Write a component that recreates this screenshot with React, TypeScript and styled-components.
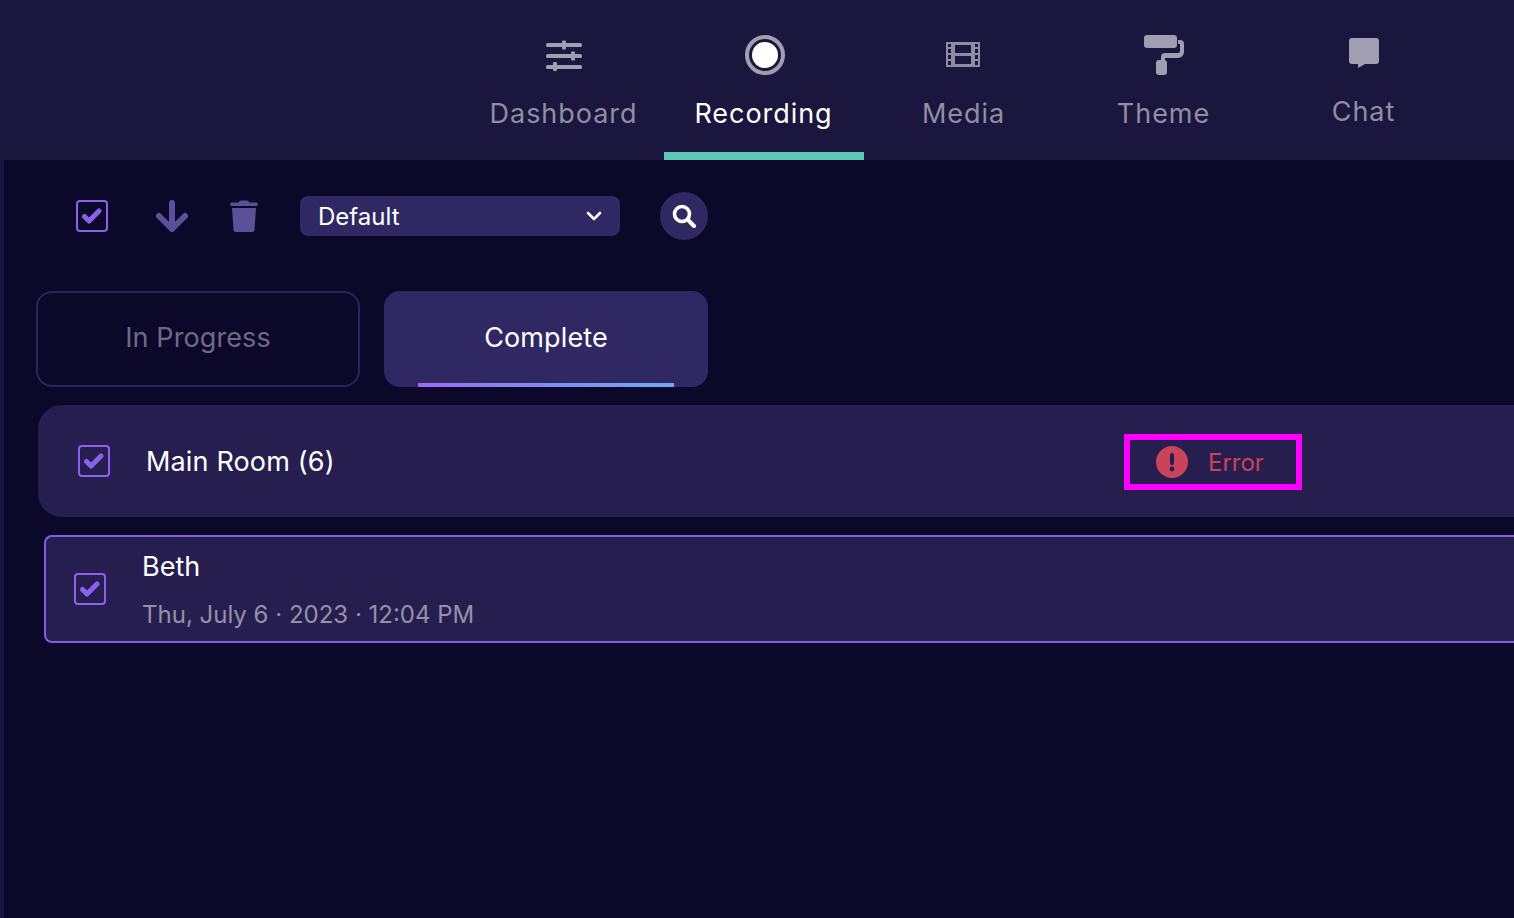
import styled, { createGlobalStyle } from "styled-components";

const GlobalStyle = createGlobalStyle`
  html, body {
    margin: 0;
    padding: 0;
    background: #0c0829;
  }
  * {
    box-sizing: border-box;
  }
`;

const navItems = [
  { label: "Dashboard", icon: <SlidersIcon /> },
  { label: "Recording", icon: <RecordIcon />, active: true, nudge: 2 },
  { label: "Media", icon: <FilmIcon />, nudge: -2 },
  { label: "Theme", icon: <RollerIcon /> },
  { label: "Chat", icon: <ChatIcon />, compact: true },
];

const App = () => {
  return (
    <Page>
      <GlobalStyle />
      <Header>
        {navItems.map((item) => (
          <NavItem key={item.label} $active={item.active}>
            <NavIcon $compact={item.compact} $nudge={item.nudge}>
              {item.icon}
            </NavIcon>
            <NavLabel $active={item.active}>{item.label}</NavLabel>
          </NavItem>
        ))}
      </Header>
      <Body>
        <SideStrip />
        <Content>
          <Toolbar>
            <ToolbarCheck>
              <CheckBox />
            </ToolbarCheck>
            <ArrowIcon />
            <TrashIcon />
            <Select>
              <span>Default</span>
              <ChevronIcon />
            </Select>
            <SearchButton>
              <SearchIcon />
            </SearchButton>
          </Toolbar>
          <Tabs>
            <Tab>In Progress</Tab>
            <Tab $active>
              Complete
              <TabUnderline />
            </Tab>
          </Tabs>
          <RoomRow>
            <CheckBox />
            <RoomName>Main Room (6)</RoomName>
            <ErrorBox>
              <ErrorIcon />
              <ErrorText>Error</ErrorText>
            </ErrorBox>
          </RoomRow>
          <RecordingRow>
            <CheckBox />
            <RecordingInfo>
              <RecordingName>Beth</RecordingName>
              <RecordingDate>Thu, July 6 · 2023 · 12:04 PM</RecordingDate>
            </RecordingInfo>
          </RecordingRow>
        </Content>
      </Body>
    </Page>
  );
};

function SlidersIcon() {
  return (
    <svg width="36" height="32" viewBox="0 0 36 32" fill="#a19eb2">
      <rect y="4" width="36" height="4" rx="1.5" />
      <rect y="15" width="36" height="4" rx="1.5" />
      <rect y="26" width="36" height="4" rx="1.5" />
      <rect x="16" y="1.500" width="4" height="9" rx="1" />
      <rect x="25" y="12.500" width="4" height="9" rx="1" />
      <rect x="7" y="23" width="4" height="9" rx="1" />
    </svg>
  );
}

function RecordIcon() {
  return (
    <svg width="40" height="40" viewBox="0 0 40 40">
      <circle cx="20" cy="20" r="18" fill="none" stroke="#a19eb2" strokeWidth="4" />
      <circle cx="20" cy="20" r="13" fill="#fff" />
    </svg>
  );
}

function FilmIcon() {
  return (
    <svg width="34" height="26" viewBox="0 0 34 26" fill="#8f8ba3">
      <path
        fillRule="evenodd"
        d="M0 0h34v25H0zM2 2v3h3V2zm0 5v4h3V7zm0 6v4h3v-4zm0 6v4h3v-4zM29 2v3h3V2zm0 5v4h3V7zm0 6v4h3v-4zm0 6v4h3v-4zM9 3v8h16V3zm0 11v8h16v-8z"
      />
    </svg>
  );
}

function RollerIcon() {
  return (
    <svg width="40" height="40" viewBox="0 0 40 40" fill="#a19eb2">
      <rect width="33" height="13" rx="3" />
      <path d="M34 5h2a4 4 0 0 1 4 4v8a6 6 0 0 1-6 6H21v5h-4v-6a4 4 0 0 1 4-4h13a2 2 0 0 0 2-2V9h-2z" />
      <rect x="12" y="25" width="11" height="15" rx="3" />
    </svg>
  );
}

function ChatIcon() {
  return (
    <svg width="30" height="30" viewBox="0 0 30 30" fill="#a19eb2">
      <path d="M3 0h24a3 3 0 0 1 3 3v20a3 3 0 0 1-3 3H16l-7 4v-4H3a3 3 0 0 1-3-3V3a3 3 0 0 1 3-3z" />
    </svg>
  );
}

function CheckBox() {
  return (
    <CheckFrame>
      <svg width="20" height="16" viewBox="0 0 20 16" fill="none">
        <path
          d="M2.500 8.500l4.500 4.500L17 3"
          stroke="#8b62f0"
          strokeWidth="5"
          strokeLinecap="round"
          strokeLinejoin="round"
        />
      </svg>
    </CheckFrame>
  );
}

function ArrowIcon() {
  return (
    <svg width="32" height="32" viewBox="0 0 32 32" fill="none">
      <path
        d="M16 3v26M3 16l13 13 13-13"
        stroke="#5c5199"
        strokeWidth="6"
        strokeLinecap="round"
        strokeLinejoin="round"
      />
    </svg>
  );
}

function TrashIcon() {
  return (
    <svg width="32" height="32" viewBox="0 0 32 32" fill="#5c5199">
      <rect x="2" y="2.500" width="28" height="3.500" rx="1.750" />
      <path d="M11 3a2 2 0 0 1 2-2.500h6A2 2 0 0 1 21 3z" />
      <path d="M4 8h24l-1.500 22a2 2 0 0 1-2 2h-17a2 2 0 0 1-2-2z" />
    </svg>
  );
}

function ChevronIcon() {
  return (
    <svg width="16" height="10" viewBox="0 0 16 10" fill="none">
      <path
        d="M2 2l6 6 6-6"
        stroke="#fff"
        strokeWidth="2.600"
        strokeLinecap="round"
        strokeLinejoin="round"
      />
    </svg>
  );
}

function SearchIcon() {
  return (
    <svg width="24" height="24" viewBox="0 0 24 24" fill="none" stroke="#fff">
      <circle cx="10" cy="10" r="7.500" strokeWidth="3.600" />
      <path d="M16 16l6 6" strokeWidth="4" strokeLinecap="round" />
    </svg>
  );
}

function ErrorIcon() {
  return (
    <svg width="32" height="32" viewBox="0 0 32 32">
      <circle cx="16" cy="16" r="16" fill="#c9435a" />
      <rect x="14" y="7" width="4" height="12" rx="2" fill="#271e50" />
      <circle cx="16" cy="23" r="2.400" fill="#271e50" />
    </svg>
  );
}

const Page = styled.div`
  width: 1514px;
  height: 918px;
  overflow: hidden;
  display: flex;
  flex-direction: column;
  background: #0c0829;
  font-family: Inter, "Liberation Sans", sans-serif;
  color: #fff;
`;

const Header = styled.header`
  flex: 0 0 160px;
  display: flex;
  justify-content: flex-end;
  padding-right: 50px;
  background: #1a163e;
`;

const NavItem = styled.div<{ $active?: boolean }>`
  width: 200px;
  height: 160px;
  padding-top: 35px;
  display: flex;
  flex-direction: column;
  align-items: center;
  border-bottom: 8px solid ${(props) => (props.$active ? "#5ac8b4" : "transparent")};
`;

const NavIcon = styled.div<{ $compact?: boolean; $nudge?: number }>`
  height: ${(props) => (props.$compact ? "36px" : "40px")};
  margin-bottom: ${(props) => (props.$compact ? "2px" : "0")};
  margin-left: ${(props) => props.$nudge || 0}px;
  display: flex;
  align-items: center;
  justify-content: center;
`;

const NavLabel = styled.div<{ $active?: boolean }>`
  margin-top: 23px;
  padding-right: 1px;
  font-size: 27px;
  line-height: 32px;
  letter-spacing: 0.95px;
  color: ${(props) => (props.$active ? "#fff" : "#918ea3")};
`;

const Body = styled.div`
  flex: 1;
  display: flex;
  min-height: 0;
`;

const SideStrip = styled.div`
  flex: 0 0 4px;
  background: #1a163e;
`;

const Content = styled.main`
  flex: 1;
  min-width: 0;
  display: flex;
  flex-direction: column;
`;

const Toolbar = styled.div`
  height: 48px;
  margin-top: 32px;
  padding-left: 72px;
  display: flex;
  align-items: center;
  gap: 40px;
`;

const ToolbarCheck = styled.div`
  margin-right: 8px;
  display: flex;
`;

const CheckFrame = styled.div`
  flex: 0 0 32px;
  width: 32px;
  height: 32px;
  display: flex;
  align-items: center;
  justify-content: center;
  border: 2px solid #8b62f0;
  border-radius: 4px;
`;

const Select = styled.div`
  width: 320px;
  height: 40px;
  padding: 0 18px;
  display: flex;
  align-items: center;
  justify-content: space-between;
  background: #302863;
  border-radius: 8px;
  font-size: 24px;
`;

const SearchButton = styled.div`
  width: 48px;
  height: 48px;
  display: flex;
  align-items: center;
  justify-content: center;
  background: #302863;
  border-radius: 50%;
`;

const Tabs = styled.div`
  margin-top: 51px;
  padding-left: 32px;
  display: flex;
  gap: 24px;
`;

const Tab = styled.div<{ $active?: boolean }>`
  position: relative;
  width: 324px;
  height: 96px;
  padding-bottom: 4px;
  display: flex;
  align-items: center;
  justify-content: center;
  border: 2px solid ${(props) => (props.$active ? "#302863" : "#2c2559")};
  border-radius: 16px;
  background: ${(props) => (props.$active ? "#302863" : "transparent")};
  color: ${(props) => (props.$active ? "#fff" : "#6e6a86")};
  font-size: 27px;
  letter-spacing: 0.1px;
`;

const TabUnderline = styled.div`
  position: absolute;
  left: 32px;
  right: 32px;
  bottom: -2px;
  height: 4px;
  background: linear-gradient(90deg, #9a6bf5, #6eaaf0);
`;

const RoomRow = styled.div`
  height: 112px;
  margin: 18px 0 0 34px;
  padding-left: 40px;
  display: flex;
  align-items: center;
  background: #271e50;
  border-radius: 24px 0 0 24px;
`;

const RoomName = styled.div`
  flex: 0 0 1014px;
  padding-left: 36px;
  font-size: 27px;
  letter-spacing: 0.15px;
`;

const ErrorBox = styled.div`
  width: 178px;
  height: 56px;
  margin-top: 2px;
  padding-left: 26px;
  display: flex;
  align-items: center;
  gap: 20px;
  border: 6px solid #ff00ff;
`;

const ErrorText = styled.span`
  color: #c9435a;
  font-size: 24px;
`;

const RecordingRow = styled.div`
  height: 108px;
  margin: 18px 0 0 40px;
  padding-left: 28px;
  display: flex;
  align-items: center;
  gap: 36px;
  background: #271e50;
  border: 2px solid #7f5fe0;
  border-right: none;
  border-radius: 8px 0 0 8px;
`;

const RecordingInfo = styled.div`
  margin-top: 3px;
  display: flex;
  flex-direction: column;
  gap: 17px;
`;

const RecordingName = styled.div`
  font-size: 27px;
  line-height: 32px;
`;

const RecordingDate = styled.div`
  font-size: 24px;
  line-height: 30px;
  color: #9591a8;
`;

export default App;
